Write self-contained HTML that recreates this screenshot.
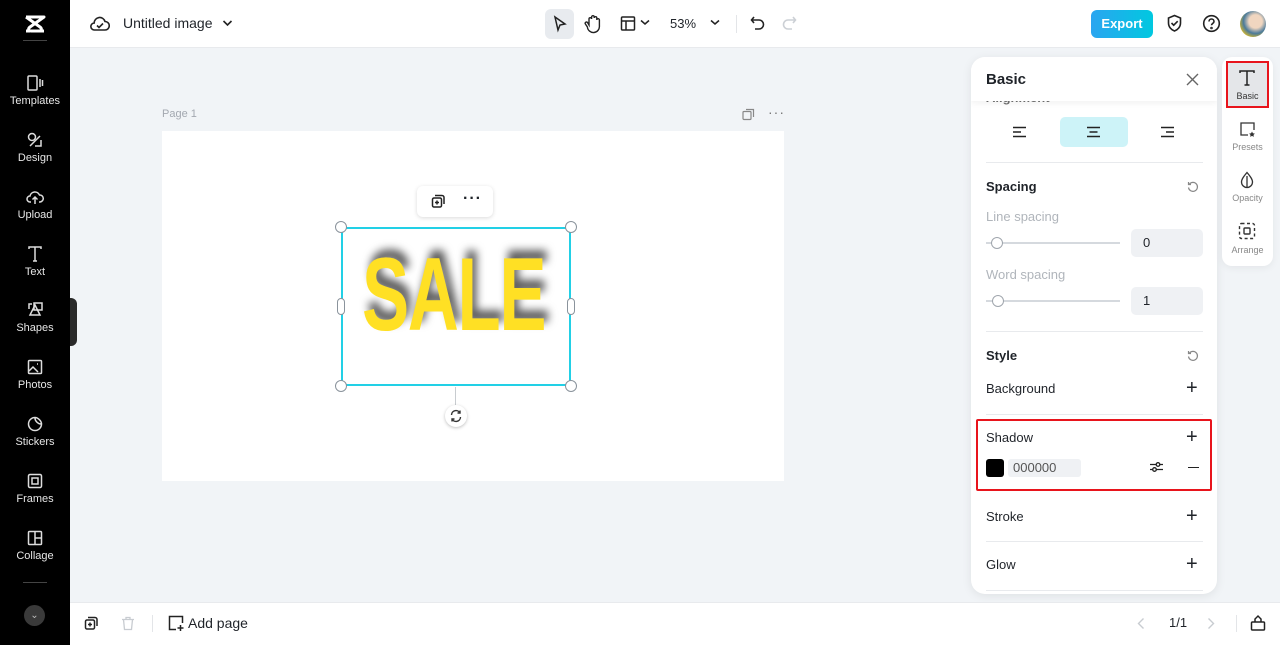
<!DOCTYPE html>
<html><head><meta charset="utf-8"><style>
*{box-sizing:border-box;margin:0;padding:0}
body{width:1280px;height:645px;overflow:hidden;font-family:"Liberation Sans",sans-serif;background:#f1f4f7;position:relative;color:#1f2329}
.abs{position:absolute}
#side{left:0;top:0;width:70px;height:645px;background:#000;color:#ddd}
.si{position:absolute;left:0;width:70px;text-align:center;font-size:11px;color:#e6e6e6}
.si svg{display:block;margin:0 auto 3px}
#top{left:70px;top:0;width:1210px;height:48px;background:#fff;border-bottom:1px solid #e8eaed}
#bot{left:70px;top:602px;width:1210px;height:43px;background:#fff;border-top:1px solid #e8eaed}
.panel{left:971px;top:57px;width:246px;height:537px;background:#fff;border-radius:14px;box-shadow:0 2px 10px rgba(0,0,0,.08);overflow:hidden}
.hr{position:absolute;left:15px;width:217px;height:1px;background:#e8eaed}
.pt{position:absolute;left:15px;font-size:13px;color:#1f2329}
.plus{position:absolute;left:215px;font-size:20px;font-weight:300;line-height:1}
</style></head><body>
<div id="side" class="abs">
 <svg class="abs" style="left:22px;top:13px" width="26" height="22" viewBox="0 0 26 22" fill="none" stroke="#fff" stroke-width="3" stroke-linejoin="round"><path d="M4 4h18L8 14c-2 1.5-2 4 1 4h13M4 18"/><path d="M4 18h4M4 4l14 10c2 1.5 2 4-1 4"/></svg>
 <div class="abs" style="left:23px;top:40px;width:24px;height:1px;background:#444"></div>
 <div class="si" style="top:74px"><svg width="18" height="18" viewBox="0 0 18 18" fill="none" stroke="#ddd" stroke-width="1.5"><rect x="2" y="2" width="9" height="14" rx="1"/><path d="M14 5v8M16.5 6v6"/></svg>Templates</div>
 <div class="si" style="top:131px"><svg width="18" height="18" viewBox="0 0 18 18" fill="none" stroke="#ddd" stroke-width="1.5"><circle cx="6" cy="6" r="3.5"/><path d="M4 15l10-10M9 15h6V9"/></svg>Design</div>
 <div class="si" style="top:188px"><svg width="18" height="18" viewBox="0 0 18 18" fill="none" stroke="#ddd" stroke-width="1.5"><path d="M5 14H4a3 3 0 010-6 5 5 0 019.5-1A3.5 3.5 0 0114 14h-1M9 16V9M6.5 11.5L9 9l2.5 2.5"/></svg>Upload</div>
 <div class="si" style="top:245px"><svg width="18" height="18" viewBox="0 0 18 18" fill="none" stroke="#ddd" stroke-width="1.5"><path d="M3 4V2h12v2M9 2v14M7 16h4"/></svg>Text</div>
 <div class="si" style="top:301px"><svg width="18" height="18" viewBox="0 0 18 18" fill="none" stroke="#ddd" stroke-width="1.5"><path d="M6 3H3v5M9 4l5 10H4z"/><rect x="8" y="2" width="8" height="7"/></svg>Shapes</div>
 <div class="si" style="top:358px"><svg width="18" height="18" viewBox="0 0 18 18" fill="none" stroke="#ddd" stroke-width="1.5"><rect x="2.5" y="2.5" width="13" height="13" rx="1"/><path d="M3 13l4-4 5 5M11 6h1"/></svg>Photos</div>
 <div class="si" style="top:415px"><svg width="18" height="18" viewBox="0 0 18 18" fill="none" stroke="#ddd" stroke-width="1.5"><path d="M15.5 9A6.5 6.5 0 119 2.5c3 0 6.5 3.5 6.5 6.5zM9 3c0 3 3 6 6 6"/></svg>Stickers</div>
 <div class="si" style="top:472px"><svg width="18" height="18" viewBox="0 0 18 18" fill="none" stroke="#ddd" stroke-width="1.5"><rect x="2.5" y="2.5" width="13" height="13" rx="1.5"/><rect x="6" y="6" width="6" height="6"/></svg>Frames</div>
 <div class="si" style="top:529px"><svg width="18" height="18" viewBox="0 0 18 18" fill="none" stroke="#ddd" stroke-width="1.5"><rect x="2.5" y="2.5" width="13" height="13" rx="1"/><path d="M9 2.5v13M9 9h6.5"/></svg>Collage</div>
 <div class="abs" style="left:23px;top:582px;width:24px;height:1px;background:#444"></div>
 <div class="abs" style="left:24px;top:605px;width:21px;height:21px;border-radius:50%;background:#3a3a3a;color:#bbb;font-size:10px;text-align:center;line-height:21px">&#8964;</div>
 <div class="abs" style="left:70px;top:298px;width:7px;height:48px;background:#2a2a2a;border-radius:0 6px 6px 0"></div>
</div>

<div id="top" class="abs">
 <svg class="abs" style="left:20px;top:15px" width="20" height="18" viewBox="0 0 20 18" fill="none" stroke="#222" stroke-width="1.6"><path d="M5 15H4.5a3.5 3.5 0 01-.3-7A5.5 5.5 0 0115 6.5 4 4 0 0115 15z"/><path d="M7 10.5l2 2 4-4"/></svg>
 <div class="abs" style="left:53px;top:15px;font-size:14px;color:#1f2329">Untitled image</div>
 <svg class="abs" style="left:152px;top:19px" width="11" height="8" viewBox="0 0 11 8"><path d="M1.5 2l4 4 4-4" fill="none" stroke="#222" stroke-width="1.6"/></svg>
 <div class="abs" style="left:475px;top:9px;width:29px;height:30px;background:#e8ebef;border-radius:6px"></div>
 <svg class="abs" style="left:482px;top:15px" width="16" height="18" viewBox="0 0 16 18" fill="none" stroke="#222" stroke-width="1.5"><path d="M3 2l10 7-5 1-2 5z"/></svg>
 <svg class="abs" style="left:514px;top:14px" width="18" height="20" viewBox="0 0 18 20" fill="none" stroke="#222" stroke-width="1.4"><path d="M5 11V5a1.3 1.3 0 012.6 0V3a1.3 1.3 0 012.6 0v1a1.3 1.3 0 012.6 0v2a1.3 1.3 0 012.6 0v6a6 6 0 01-12 1l-2-3a1.3 1.3 0 012.2-1.4z"/></svg>
 <svg class="abs" style="left:550px;top:15px" width="16" height="17" viewBox="0 0 16 17" fill="none" stroke="#222" stroke-width="1.5"><rect x="1.5" y="2" width="13" height="13" rx="1"/><path d="M1.5 6h13M6 6v9"/></svg>
 <svg class="abs" style="left:570px;top:19px" width="10" height="7" viewBox="0 0 10 7"><path d="M1 1.5l4 3.5 4-3.5" fill="none" stroke="#222" stroke-width="1.5"/></svg>
 <div class="abs" style="left:600px;top:16px;font-size:13px">53%</div>
 <svg class="abs" style="left:640px;top:19px" width="10" height="7" viewBox="0 0 10 7"><path d="M1 1.5l4 3.5 4-3.5" fill="none" stroke="#222" stroke-width="1.5"/></svg>
 <div class="abs" style="left:666px;top:15px;width:1px;height:18px;background:#e3e5e8"></div>
 <svg class="abs" style="left:680px;top:15px" width="15" height="17" viewBox="0 0 15 17" fill="none" stroke="#222" stroke-width="1.6"><path d="M4 2L1.5 5 4 8M1.5 5H9a4.5 4.5 0 010 9H5"/></svg>
 <svg class="abs" style="left:712px;top:15px" width="15" height="17" viewBox="0 0 15 17" fill="none" stroke="#ccd0d5" stroke-width="1.6"><path d="M11 2l2.5 3L11 8M13.5 5H6a4.5 4.5 0 000 9h4"/></svg>
 <div class="abs" style="left:1021px;top:10px;width:62px;height:28px;border-radius:6px;background:linear-gradient(90deg,#2ba5f0,#00c8e0);color:#fff;font-size:13px;font-weight:bold;text-align:center;line-height:28px">Export</div>
 <svg class="abs" style="left:1096px;top:14px" width="17" height="19" viewBox="0 0 17 19" fill="none" stroke="#222" stroke-width="1.6"><path d="M8.5 1.5l6 2.5v5c0 4-3 7-6 8-3-1-6-4-6-8V4z"/><path d="M5.5 9l2.2 2.2 4-4"/></svg>
 <svg class="abs" style="left:1132px;top:14px" width="19" height="19" viewBox="0 0 19 19" fill="none" stroke="#222" stroke-width="1.6"><circle cx="9.5" cy="9.5" r="7.8"/><path d="M7 7.5a2.5 2.5 0 115 0c0 1.8-2.5 2-2.5 3.8"/><circle cx="9.5" cy="14" r=".5"/></svg>
 <div class="abs" style="left:1170px;top:11px;width:26px;height:26px;border-radius:50%;background:radial-gradient(circle at 60% 40%,#f0d6c0 0 30%,#4a7a9a 55%,#e6c020 80%)"></div>
</div>

<div class="abs" style="left:162px;top:108px;font-size:11px;color:#a3a8b0">Page 1</div>
<svg class="abs" style="left:742px;top:108px" width="13" height="13" viewBox="0 0 13 13" fill="none" stroke="#888" stroke-width="1.2"><rect x="1" y="3.5" width="8" height="8" rx="1"/><path d="M4 1.5h7.5V9"/></svg>
<div class="abs" style="left:768px;top:104px;font-size:14px;color:#777;letter-spacing:1px">···</div>
<div class="abs" style="left:162px;top:131px;width:622px;height:350px;background:#fff"></div>

<div class="abs" style="left:417px;top:186px;width:76px;height:31px;background:#fff;border-radius:6px;box-shadow:0 1px 4px rgba(0,0,0,.15)"></div>
<svg class="abs" style="left:431px;top:194px" width="15" height="15" viewBox="0 0 15 15" fill="none" stroke="#222" stroke-width="1.5"><rect x="1.5" y="4" width="9" height="9" rx="1.5"/><path d="M4 1.5h7a2 2 0 012 2V10M6 6.5v4M4 8.5h4"/></svg>
<div class="abs" style="left:463px;top:190px;font-size:16px;font-weight:bold;letter-spacing:1px">···</div>

<div class="abs" style="left:362px;top:243px;font-family:'Liberation Sans',sans-serif;font-weight:bold;font-size:104px;line-height:1;color:#ffe024;transform:scaleX(.68);transform-origin:left top;text-shadow:6px -8px 10px rgba(0,0,0,.65);letter-spacing:-2px;white-space:nowrap">SALE</div>
<div class="abs" style="left:341px;top:227px;width:230px;height:159px;border:2px solid #22d0e6"></div>
<div class="abs" style="left:335px;top:221px;width:12px;height:12px;border-radius:50%;background:#fff;border:1px solid #8a939c"></div>
<div class="abs" style="left:565px;top:221px;width:12px;height:12px;border-radius:50%;background:#fff;border:1px solid #8a939c"></div>
<div class="abs" style="left:335px;top:380px;width:12px;height:12px;border-radius:50%;background:#fff;border:1px solid #8a939c"></div>
<div class="abs" style="left:565px;top:380px;width:12px;height:12px;border-radius:50%;background:#fff;border:1px solid #8a939c"></div>
<div class="abs" style="left:337px;top:298px;width:8px;height:17px;border-radius:4px;background:#fff;border:1px solid #8a939c"></div>
<div class="abs" style="left:567px;top:298px;width:8px;height:17px;border-radius:4px;background:#fff;border:1px solid #8a939c"></div>
<div class="abs" style="left:455px;top:387px;width:1px;height:18px;background:#c8ccd0"></div>
<div class="abs" style="left:445px;top:405px;width:22px;height:22px;border-radius:50%;background:#fff;box-shadow:0 1px 3px rgba(0,0,0,.25)"></div>
<svg class="abs" style="left:449px;top:409px" width="14" height="14" viewBox="0 0 14 14" fill="none" stroke="#333" stroke-width="1.4"><path d="M2.5 6A4.5 4.5 0 0111 4M11.5 8A4.5 4.5 0 013 10M11 1.5V4H8.5M3 12.5V10h2.5"/></svg>

<div class="abs panel">
 <div class="pt" style="top:33px;font-size:13px;color:#333;font-weight:bold;opacity:.7;clip-path:inset(8px 0 0 0)">Alignment</div>
 <div class="abs" style="left:0;top:0;width:246px;height:44px;background:#fff;box-shadow:0 2px 6px rgba(0,0,0,.06)"></div>
 <div class="pt" style="top:14px;font-size:15px;font-weight:bold">Basic</div>
 <svg class="abs" style="left:215px;top:16px" width="13" height="13" viewBox="0 0 13 13" stroke="#666" stroke-width="1.4"><path d="M1 1l11 11M12 1L1 12"/></svg>
 <div class="abs" style="left:89px;top:60px;width:68px;height:30px;border-radius:5px;background:#cdf3f8"></div>
 <svg class="abs" style="left:41px;top:69px" width="15" height="12" viewBox="0 0 15 12" stroke="#222" stroke-width="1.6"><path d="M1 1.5h13M1 6h8M1 10.5h13"/></svg>
 <svg class="abs" style="left:115px;top:69px" width="15" height="12" viewBox="0 0 15 12" stroke="#222" stroke-width="1.6"><path d="M1 1.5h13M3.5 6h8M1 10.5h13"/></svg>
 <svg class="abs" style="left:189px;top:69px" width="15" height="12" viewBox="0 0 15 12" stroke="#222" stroke-width="1.6"><path d="M1 1.5h13M6 6h8M1 10.5h13"/></svg>
 <div class="hr" style="top:105px"></div>
 <div class="pt" style="top:122px;font-weight:bold">Spacing</div>
 <svg class="abs" style="left:216px;top:124px" width="12" height="12" viewBox="0 0 12 12" fill="none" stroke="#888" stroke-width="1.2"><path d="M2.5 3A4.5 4.5 0 111.5 6.5M1.5 1v2.5H4"/></svg>
 <div class="pt" style="top:152px;color:#b0b5bb">Line spacing</div>
 <div class="abs" style="left:15px;top:185px;width:134px;height:2px;background:#d5d9de"></div>
 <div class="abs" style="left:20px;top:180px;width:12px;height:12px;border-radius:50%;background:#fff;border:1px solid #a0a6ad"></div>
 <div class="abs" style="left:160px;top:172px;width:72px;height:28px;border-radius:5px;background:#eff1f4;font-size:13px;line-height:28px;padding-left:12px">0</div>
 <div class="pt" style="top:210px;color:#b0b5bb">Word spacing</div>
 <div class="abs" style="left:15px;top:243px;width:134px;height:2px;background:#d5d9de"></div>
 <div class="abs" style="left:21px;top:238px;width:12px;height:12px;border-radius:50%;background:#fff;border:1px solid #a0a6ad"></div>
 <div class="abs" style="left:160px;top:230px;width:72px;height:28px;border-radius:5px;background:#eff1f4;font-size:13px;line-height:28px;padding-left:12px">1</div>
 <div class="hr" style="top:274px"></div>
 <div class="pt" style="top:291px;font-weight:bold">Style</div>
 <svg class="abs" style="left:216px;top:293px" width="12" height="12" viewBox="0 0 12 12" fill="none" stroke="#888" stroke-width="1.2"><path d="M2.5 3A4.5 4.5 0 111.5 6.5M1.5 1v2.5H4"/></svg>
 <div class="pt" style="top:324px">Background</div>
 <div class="plus" style="top:321px">+</div>
 <div class="hr" style="top:357px"></div>
 <div class="pt" style="top:373px">Shadow</div>
 <div class="plus" style="top:370px">+</div>
 <div class="abs" style="left:15px;top:402px;width:18px;height:18px;border-radius:3px;background:#000"></div>
 <div class="abs" style="left:37px;top:402px;width:73px;height:18px;border-radius:3px;background:#eff1f4;font-size:13px;line-height:18px;padding-left:5px;color:#555">000000</div>
 <svg class="abs" style="left:178px;top:403px" width="15" height="14" viewBox="0 0 15 14" fill="none" stroke="#222" stroke-width="1.3"><path d="M1 4.5h13M1 9.5h13"/><circle cx="9" cy="4.5" r="1.8" fill="#fff"/><circle cx="5.5" cy="9.5" r="1.8" fill="#fff"/></svg>
 <div class="abs" style="left:217px;top:410px;width:11px;height:1.4px;background:#222"></div>
 <div class="pt" style="top:452px">Stroke</div>
 <div class="plus" style="top:449px">+</div>
 <div class="hr" style="top:484px"></div>
 <div class="pt" style="top:500px">Glow</div>
 <div class="plus" style="top:497px">+</div>
 <div class="hr" style="top:533px"></div>
</div>
<div class="abs" style="left:976px;top:419px;width:236px;height:72px;border:2px solid #e8141c;border-radius:2px"></div>

<div class="abs" style="left:1222px;top:57px;width:51px;height:209px;background:#fff;border-radius:10px;box-shadow:0 2px 8px rgba(0,0,0,.06)"></div>
<div class="abs" style="left:1226px;top:61px;width:43px;height:47px;background:#e4e6e9;border:2px solid #e8141c"></div>
<svg class="abs" style="left:1238px;top:69px" width="18" height="18" viewBox="0 0 18 18" fill="none" stroke="#222" stroke-width="1.5"><path d="M2 4V2h14v2M9 2v14M6.5 16h5"/></svg>
<div class="abs" style="left:1226px;top:91px;width:43px;text-align:center;font-size:9px;color:#333">Basic</div>
<svg class="abs" style="left:1239px;top:121px" width="17" height="17" viewBox="0 0 17 17" fill="none" stroke="#333" stroke-width="1.3"><path d="M9 14H2V2h13v7"/><path d="M13 10.5l.9 1.8 2 .3-1.4 1.3.3 2-1.8-1-1.8 1 .3-2-1.4-1.3 2-.3z" fill="#333" stroke="none"/></svg>
<div class="abs" style="left:1222px;top:142px;width:51px;text-align:center;font-size:9px;color:#888">Presets</div>
<svg class="abs" style="left:1239px;top:171px" width="16" height="18" viewBox="0 0 16 18" fill="none" stroke="#333" stroke-width="1.3"><path d="M8 1.5C5 5 2.5 8 2.5 11a5.5 5.5 0 0011 0C13.5 8 11 5 8 1.5z"/><path d="M8 5v11"/></svg>
<div class="abs" style="left:1222px;top:193px;width:51px;text-align:center;font-size:9px;color:#888">Opacity</div>
<svg class="abs" style="left:1238px;top:222px" width="18" height="18" viewBox="0 0 18 18" fill="none" stroke="#333" stroke-width="1.4"><rect x="1.5" y="1.5" width="15" height="15" rx="2" stroke-dasharray="3 2.5"/><rect x="6" y="6" width="6" height="6" rx="1"/></svg>
<div class="abs" style="left:1222px;top:245px;width:51px;text-align:center;font-size:9px;color:#888">Arrange</div>

<div id="bot" class="abs">
 <svg class="abs" style="left:14px;top:13px" width="15" height="15" viewBox="0 0 15 15" fill="none" stroke="#222" stroke-width="1.5"><rect x="1.5" y="4" width="9" height="9" rx="1.5"/><path d="M4 1.5h7a2 2 0 012 2V10M6 6.5v4M4 8.5h4"/></svg>
 <svg class="abs" style="left:51px;top:13px" width="14" height="15" viewBox="0 0 14 15" fill="none" stroke="#c8ccd1" stroke-width="1.3"><path d="M1 3.5h12M5 3.5V1.5h4v2M2.5 3.5l1 10h7l1-10"/></svg>
 <div class="abs" style="left:82px;top:12px;width:1px;height:17px;background:#e3e5e8"></div>
 <svg class="abs" style="left:97px;top:11px" width="18" height="18" viewBox="0 0 18 18" fill="none" stroke="#222" stroke-width="1.5"><path d="M9 15.5H2.5v-13h13V9M13.5 11v6M10.5 14h6"/></svg>
 <div class="abs" style="left:118px;top:12px;font-size:14px">Add page</div>
 <svg class="abs" style="left:1067px;top:14px" width="8" height="13" viewBox="0 0 8 13"><path d="M6.5 1.5l-5 5 5 5" fill="none" stroke="#c8ccd1" stroke-width="1.4"/></svg>
 <div class="abs" style="left:1099px;top:12px;font-size:13px">1/1</div>
 <svg class="abs" style="left:1137px;top:14px" width="8" height="13" viewBox="0 0 8 13"><path d="M1.5 1.5l5 5-5 5" fill="none" stroke="#c8ccd1" stroke-width="1.4"/></svg>
 <div class="abs" style="left:1166px;top:12px;width:1px;height:17px;background:#e3e5e8"></div>
 <svg class="abs" style="left:1180px;top:11px" width="16" height="18" viewBox="0 0 16 18" fill="none" stroke="#222" stroke-width="1.5"><rect x="1.5" y="8" width="13" height="8" rx="1"/><path d="M5 8V5l3-3 3 3v3"/></svg>
</div>
</body></html>
